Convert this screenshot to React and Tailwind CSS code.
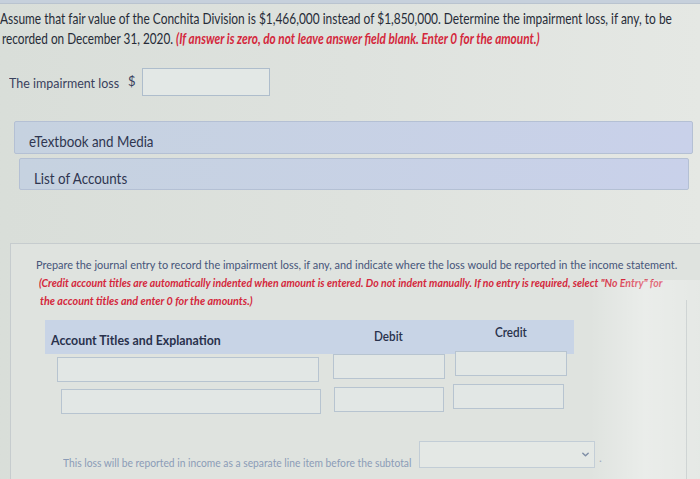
import React from 'react';

const font = { fontFamily: 'Lato, "Open Sans", sans-serif' };

// squeezed single line of text (the photo renders the Lato text condensed)
const Line = ({ className = '', children }) => (
  <span className={`inline-block whitespace-nowrap origin-left ${className}`}>{children}</span>
);

const Box = ({ className = '' }) => (
  <div className={`h-[25px] border border-[#b7c4d0] bg-[#e2e7e5] ${className}`} />
);

export default function App() {
  return (
    <div
      className="relative w-[700px] h-[479px] overflow-hidden bg-gradient-to-r from-[#d9ded9] via-[#dee2de] to-[#e5e8e4]"
      style={font}
    >
      <div className="h-[4px] bg-[#c6d0dc] border-b border-[#b9c3cf]" />

      {/* question */}
      <div className="pt-[4px] text-[15px] leading-[20px] text-[#272c38]">
        <div>
          <Line className="scale-x-[0.795]">
            Assume that fair value of the Conchita Division is $1,466,000 instead of $1,850,000. Determine the impairment loss, if any, to be
          </Line>
        </div>
        <div className="ml-[2px]">
          <Line className="scale-x-[0.785]">
            recorded on December 31, 2020.{' '}
            <span className="font-bold italic text-[#d4283c]">
              (If answer is zero, do not leave answer field blank. Enter 0 for the amount.)
            </span>
          </Line>
        </div>
      </div>

      <div className="mt-[20px] flex items-center h-[28px] text-[14px] text-[#39415d]">
        <div className="w-[128px] pl-[9px]">
          <Line className="scale-x-[0.89]">The impairment loss</Line>
        </div>
        <span className="w-[14px] text-[13px]">$</span>
        <div className="w-[128px] h-[28px] border border-[#aebdcc] bg-[#e3e8e6]" />
      </div>

      {/* resource bars */}
      <div className="mt-[25px] ml-[14px] w-[679px] h-[33px] pt-[9px] pl-[14px] leading-[20px] rounded-[2px] border border-[#b4c0d4] bg-gradient-to-r from-[#c6d2e0] to-[#c9d1ea] text-[15px] text-[#2f3650]">
        <Line className="scale-x-[0.89]">eTextbook and Media</Line>
      </div>
      <div className="mt-[4px] ml-[19px] w-[670px] h-[32px] pt-[9px] pl-[14px] leading-[20px] rounded-[2px] border border-[#b4c0d4] bg-gradient-to-r from-[#c6d2e0] to-[#c9d1ea] text-[15px] text-[#2f3650]">
        <Line className="scale-x-[0.89]">List of Accounts</Line>
      </div>

      {/* journal entry panel */}
      <div className="mt-[53px] ml-[10px] h-[260px] border-t border-l border-[#c6ccce] bg-[#dfe3df] pl-[25px] pt-[12px]">
        <div className="text-[12px] leading-[18px]">
          <div className="text-[#46557a]">
            <Line className="scale-x-[0.91]">
              Prepare the journal entry to record the impairment loss, if any, and indicate where the loss would be reported in the income statement.
            </Line>
          </div>
          <div className="ml-[3px] font-bold italic text-[#d4283c]">
            <Line className="scale-x-[0.877]">
              (Credit account titles are automatically indented when amount is entered. Do not indent manually. If no entry is required, select "No Entry" for
            </Line>
          </div>
          <div className="ml-[4px] font-bold italic text-[#d4283c]">
            <Line className="scale-x-[0.897]">the account titles and enter 0 for the amounts.)</Line>
          </div>
        </div>

        {/* table */}
        <div className="mt-[10px] ml-[9px] w-[529px] h-[34px] flex items-start bg-[#c8d4e6] text-[13px] font-bold text-[#29314c]">
          <div className="w-[322px] pl-[6px] pt-[11px]">
            <Line className="scale-x-[0.95]">Account Titles and Explanation</Line>
          </div>
          <div className="w-[122px] pt-[7px] pl-[7px] font-semibold">
            <Line className="scale-x-[0.9]">Debit</Line>
          </div>
          <div className="pt-[3px] pl-[6px] font-semibold">
            <Line className="scale-x-[0.9]">Credit</Line>
          </div>
        </div>

        <div className="mt-[0px] ml-[21px] flex items-start">
          <Box className="w-[262px] mt-[3px]" />
          <Box className="w-[112px] ml-[14px]" />
          <Box className="w-[112px] ml-[10px] -mt-[3px]" />
        </div>
        <div className="mt-[5px] ml-[25px] flex items-start">
          <Box className="w-[260px] mt-[2px]" />
          <Box className="w-[110px] ml-[13px]" />
          <Box className="w-[111px] ml-[9px] -mt-[3px]" />
        </div>

        <div className="mt-[27px] ml-[27px] flex items-start text-[12px] text-[#8b9cb7]">
          <div className="w-[356px] pt-[13px]">
            <Line className="scale-x-[0.855]">
              This loss will be reported in income as a separate line item before the subtotal
            </Line>
          </div>
          <div className="w-[176px] h-[27px] border border-[#c2cdd6] bg-[#e4e8e5] flex items-center justify-end pr-[4px]">
            <svg width="9" height="9" viewBox="0 0 10 10" fill="none">
              <path d="M2 3.5 L5 6.5 L8 3.5" stroke="#7f8ea6" strokeWidth="1.6" strokeLinecap="round" strokeLinejoin="round" />
            </svg>
          </div>
          <span className="ml-[4px] pt-[8px] text-[#9aa7ba]">.</span>
        </div>
      </div>

      {/* screen glare on the right */}
      <div className="pointer-events-none absolute right-0 top-[280px] w-[110px] h-[199px] bg-gradient-to-r from-transparent via-white/35 to-white/20" />
      <div className="pointer-events-none absolute left-[686px] top-[300px] w-px h-[179px] bg-[#cfd4d4]" />
    </div>
  );
}
